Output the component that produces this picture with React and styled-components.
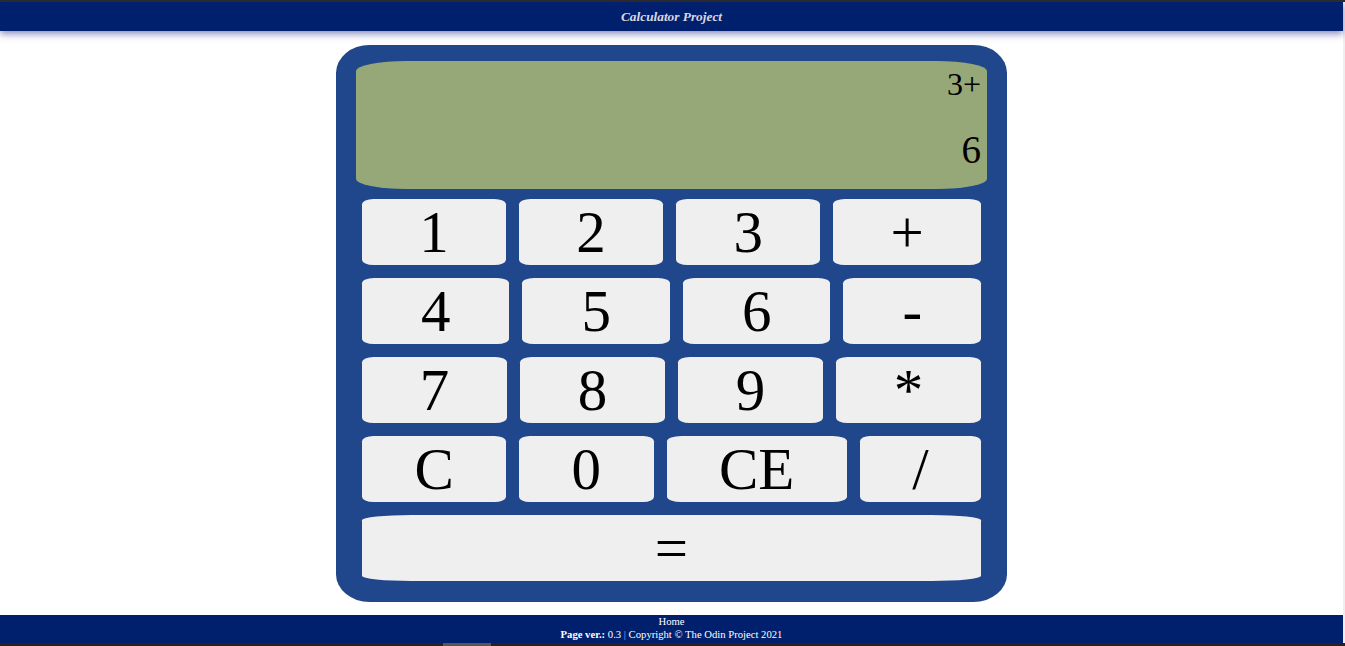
import React from 'react';
import styled, { createGlobalStyle } from 'styled-components';

const GlobalStyle = createGlobalStyle`
	html,
	body {
		margin: 0;
		padding: 0;
		background: #efefef;
		font-family: 'Liberation Serif', 'Times New Roman', serif;
	}
`;

const Shell = styled.div`
	display: flex;
	flex-direction: column;
	height: 100vh;
	border-top: 2px solid #2b2b2b;
	box-sizing: border-box;
`;

const Page = styled.div`
	flex: 1;
	display: flex;
	flex-direction: column;
	margin-right: 2px;
	background: #ffffff;
	min-height: 0;
`;

const Header = styled.header`
	height: 29px;
	background: #00206e;
	box-shadow: 0 3px 7px rgba(40, 50, 140, 0.55);
	display: flex;
	align-items: center;
	justify-content: center;
	position: relative;
	z-index: 1;
`;

const Title = styled.h1`
	margin: 0;
	padding-top: 1px;
	font-size: 13.33px;
	font-style: italic;
	font-weight: bold;
	color: #d8d8e2;
	line-height: 28px;
`;

const Main = styled.main`
	flex: 1;
	display: flex;
	justify-content: center;
	padding: 14px 0 13px;
`;

const Calculator = styled.div`
	width: 671px;
	height: 557px;
	box-sizing: border-box;
	padding: 16px 20px 21px;
	background: #20468c;
	border-radius: 5%;
	display: flex;
	flex-direction: column;
`;

const Display = styled.div`
	height: 128px;
	box-sizing: border-box;
	padding: 5px 6px 0;
	background: #97a878;
	border-radius: 8%;
	text-align: right;
	color: #000;
`;

const Expression = styled.div`
	font-size: 32px;
	line-height: 36px;
`;

const Result = styled.div`
	font-size: 39px;
	line-height: 44px;
	margin-top: 26px;
`;

const Keypad = styled.div`
	margin: 10px 6px 0;
	display: flex;
	flex-direction: column;
	gap: 13px;
`;

const Row = styled.div`
	display: flex;
	gap: 13px;
`;

const Key = styled.button`
	flex: 1 1 auto;
	height: 66px;
	padding: 0;
	border: none;
	border-radius: 8%;
	background: #efefef;
	color: #000;
	font-family: 'Liberation Serif', 'Times New Roman', serif;
	font-size: 59px;
	line-height: 66px;
	cursor: pointer;
`;

const Footer = styled.footer`
	height: 28px;
	box-sizing: border-box;
	padding-top: 0;
	background: #00206e;
	color: #ffffff;
	text-align: center;
	font-size: 10.67px;
	line-height: 13px;
`;

const FooterLink = styled.a`
	color: #ffffff;
	text-decoration: none;
`;

const Divider = styled.span`
	color: #9fb4ff;
`;

const Strip = styled.div`
	height: 3px;
	background: #2a2020;
	padding-left: 443px;
`;

const StripThumb = styled.div`
	width: 48px;
	height: 100%;
	background: #5a5454;
`;

const rows = [
	['1', '2', '3', '+'],
	['4', '5', '6', '-'],
	['7', '8', '9', '*'],
	['C', '0', 'CE', '/'],
	['='],
];

const App = () => {
	return (
		<>
			<GlobalStyle />
			<Shell>
				<Page>
					<Header>
						<Title>Calculator Project</Title>
					</Header>
					<Main>
						<Calculator>
							<Display>
								<Expression>3+</Expression>
								<Result>6</Result>
							</Display>
							<Keypad>
								{rows.map((row, i) => (
									<Row key={i}>
										{row.map((k) => (
											<Key key={k}>{k}</Key>
										))}
									</Row>
								))}
							</Keypad>
						</Calculator>
					</Main>
					<Footer>
						<div>
							<FooterLink href="#!">Home</FooterLink>
						</div>
						<div>
							<b>Page ver.:</b> 0.3 <Divider>|</Divider> Copyright © The Odin
							Project 2021
						</div>
					</Footer>
				</Page>
				<Strip>
					<StripThumb />
				</Strip>
			</Shell>
		</>
	);
};

export default App;
